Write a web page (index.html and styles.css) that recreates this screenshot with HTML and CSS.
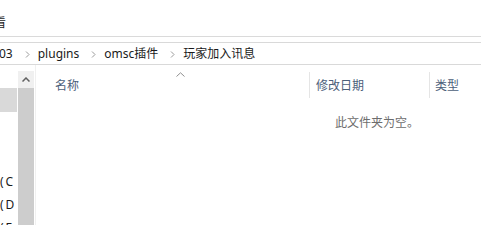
FILE: index.html
```html
<!DOCTYPE html>
<html lang="zh-CN">
<head>
<meta charset="utf-8">
<title>玩家加入讯息</title>
<link rel="stylesheet" href="styles.css">
</head>
<body>
<div class="window">
  <div class="ribbon"><span class="tab">查看</span></div>
  <div class="address">
    <span class="crumb first">03</span>
    <svg class="chev" width="5" height="7" viewBox="0 0 5 7"><path d="M1 0.5 L4 3.5 L1 6.5" fill="none" stroke="#9a9a9a" stroke-width="1"/></svg>
    <span class="crumb">plugins</span>
    <svg class="chev" width="5" height="7" viewBox="0 0 5 7"><path d="M1 0.5 L4 3.5 L1 6.5" fill="none" stroke="#9a9a9a" stroke-width="1"/></svg>
    <span class="crumb">omsc插件</span>
    <svg class="chev" width="5" height="7" viewBox="0 0 5 7"><path d="M1 0.5 L4 3.5 L1 6.5" fill="none" stroke="#9a9a9a" stroke-width="1"/></svg>
    <span class="crumb">玩家加入讯息</span>
  </div>
  <div class="main">
    <nav class="nav">
      <div class="navlist">
        <div class="nav-sel"></div>
        <div class="nav-gap"></div>
        <div class="drive">(C:)</div>
        <div class="drive">(D:)</div>
        <div class="drive">(E:)</div>
      </div>
      <div class="scrollbar">
        <div class="sb-up">
          <svg width="8" height="5" viewBox="0 0 8 5"><path d="M0.5 4.5 L4 1 L7.5 4.5" fill="none" stroke="#606060" stroke-width="1.5"/></svg>
        </div>
        <div class="sb-thumb"></div>
      </div>
    </nav>
    <section class="content">
      <div class="header">
        <div class="col col-name">名称
          <svg class="sort" width="9" height="5" viewBox="0 0 9 5"><path d="M0.5 4.5 L4.5 0.8 L8.5 4.5" fill="none" stroke="#8f8f8f" stroke-width="1"/></svg>
        </div>
        <div class="col col-date">修改日期</div>
        <div class="col col-type">类型</div>
      </div>
      <div class="empty">此文件夹为空。</div>
    </section>
  </div>
</div>
</body>
</html>
```

FILE: styles.css
```css
* { box-sizing: border-box; }
html, body {
  margin: 0;
  padding: 0;
  background: #ffffff;
}
body {
  width: 481px;
  height: 225px;
  overflow: hidden;
  font-family: "Noto Sans", "Noto Sans CJK SC", sans-serif;
  font-size: 12px;
  color: #1a1a1a;
}
.window {
  width: 481px;
  height: 225px;
  display: flex;
  flex-direction: column;
  overflow: hidden;
}
.ribbon {
  height: 37px;
  border-bottom: 1px solid #dadada;
  padding-top: 14px;
  line-height: 16px;
  white-space: nowrap;
  overflow: hidden;
}
.tab {
  display: inline-block;
  margin-left: -18px;
  color: #1a1a1a;
  font-family: "Noto Sans CJK SC", sans-serif;
}
.address {
  margin-top: 5px;
  height: 23px;
  border-top: 1px solid #d9d9d9;
  border-bottom: 1px solid #d9d9d9;
  display: flex;
  align-items: center;
  white-space: nowrap;
  line-height: 21px;
  color: #1a1a1a;
}
.crumb {
  display: inline-block;
}
.crumb.first {
  margin-left: -1px;
}
.chev {
  flex: none;
  margin: 1px 8px 0 12px;
}
.main {
  flex: 1;
  display: flex;
  min-height: 0;
}
.nav {
  width: 36px;
  flex: none;
  display: flex;
  border-right: 1px solid #f0f0f0;
}
.navlist {
  width: 17px;
  flex: none;
  overflow: hidden;
  padding-top: 23px;
}
.nav-sel {
  height: 24px;
  background: #d9d9d9;
}
.nav-gap {
  height: 58px;
}
.drive {
  width: 15px;
  height: 23px;
  overflow: hidden;
  line-height: 23px;
  white-space: nowrap;
  letter-spacing: 2px;
  color: #1a1a1a;
}
.scrollbar {
  width: 16px;
  flex: none;
  margin-left: 1px;
  margin-top: 6px;
  display: flex;
  flex-direction: column;
}
.sb-up {
  height: 17px;
  background: #f0f0f0;
  display: flex;
  justify-content: center;
  padding-top: 6px;
}
.sb-up svg { display: block; }
.sb-thumb {
  flex: 1;
  background: #cdcdcd;
}
.content {
  flex: 1;
  min-width: 0;
}
.header {
  margin-top: 7px;
  height: 26px;
  display: flex;
  padding-left: 19px;
  color: #4c607a;
  font-family: "Noto Sans CJK SC", sans-serif;
  line-height: 26px;
}
.col {
  height: 26px;
  white-space: nowrap;
}
.col-name {
  position: relative;
  width: 254px;
  flex: none;
}
.sort {
  position: absolute;
  top: 0;
  left: 121px;
  display: block;
}
.col-date {
  width: 120px;
  flex: none;
  border-left: 1px solid #e5e5e5;
  padding-left: 6px;
}
.col-type {
  flex: 1;
  border-left: 1px solid #e5e5e5;
  padding-left: 5px;
}
.empty {
  margin-top: 16px;
  padding-left: 299px;
  line-height: 16px;
  color: #6d6d6d;
  font-family: "Noto Sans CJK SC", sans-serif;
  white-space: nowrap;
}
```
